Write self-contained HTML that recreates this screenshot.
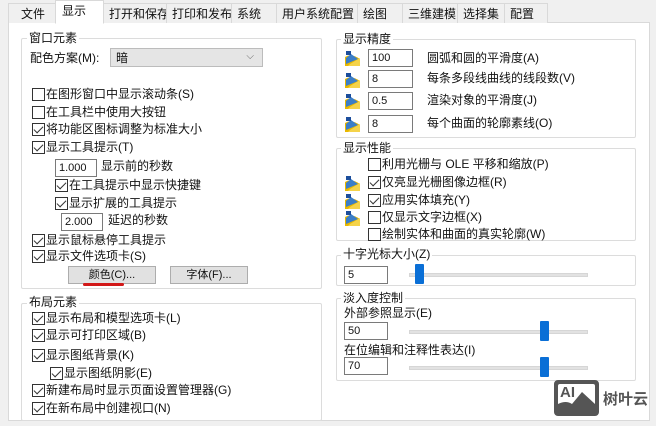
<!DOCTYPE html><html><head><meta charset="utf-8"><style>
*{box-sizing:border-box;margin:0;padding:0}
body{width:656px;height:426px;background:#f0f0f0;position:relative;overflow:hidden;font-family:"Liberation Sans","Noto Sans CJK SC",sans-serif;font-size:12px;color:#111}
.a{position:absolute;white-space:nowrap;line-height:14px}
.tab{position:absolute;top:3px;height:20px;background:#f0f0f0;border:1px solid #d9d9d9;border-bottom:none;padding:3px 0 0 5px;font-size:12px;white-space:nowrap;overflow:hidden;line-height:14px}
.panel{position:absolute;left:8px;top:22px;width:642px;height:399px;background:#fff;border:1px solid #d9d9d9}
.g{position:absolute;border:1px solid #dcdcdc;border-radius:2px}
.gt{position:absolute;background:#fff;padding:0 2px;line-height:14px}
.cb{position:absolute;width:13px;height:13px;border:1px solid #333;background:#fff}
.cb.c::after{content:"";position:absolute;left:3px;top:0px;width:4px;height:8px;border:solid #333;border-width:0 1.3px 1.3px 0;transform:rotate(45deg)}
.in{position:absolute;height:18px;border:1px solid #7a7a7a;background:#fff;padding:1px 3px;font-size:11px;line-height:14px}
.btn{position:absolute;height:18px;background:#e1e1e1;border:1px solid #adadad;text-align:center;line-height:16px;font-size:11px}
.trk{position:absolute;height:4px;background:#e2e2e2;border:1px solid #d6d6d6}
.th{position:absolute;width:9px;height:20px;background:#0a6fd6;border-radius:1px}
.ic{position:absolute;width:15px;height:16px}
</style></head><body>
<div class="panel"></div>
<div class="tab" style="left:8px;width:48px;padding-left:12px">文件</div>
<div class="tab" style="left:55px;top:0;height:24px;width:49px;background:#fff;z-index:2;border-bottom:1px solid #fff;padding-left:6px">显示</div>
<div class="tab" style="left:103px;width:64px">打开和保存</div>
<div class="tab" style="left:166px;width:66px">打印和发布</div>
<div class="tab" style="left:231px;width:46px">系统</div>
<div class="tab" style="left:276px;width:82px">用户系统配置</div>
<div class="tab" style="left:357px;width:46px">绘图</div>
<div class="tab" style="left:402px;width:56px">三维建模</div>
<div class="tab" style="left:457px;width:48px">选择集</div>
<div class="tab" style="left:504px;width:44px">配置</div>

<div class="g" style="left:21px;top:38px;width:301px;height:251px"></div>
<div class="gt a" style="left:27px;top:31px">窗口元素</div>
<div class="a" style="left:30px;top:51px">配色方案(M):</div>
<div style="position:absolute;left:110px;top:48px;width:153px;height:19px;background:#e5e5e5;border:1px solid #bcbcbc;padding:2px 5px;line-height:14px">暗<span style="position:absolute;right:8px;top:1px;color:#666;font-size:10px">⌵</span></div>
<div class="cb" style="left:32px;top:88px"></div><div class="a" style="left:46px;top:87px">在图形窗口中显示滚动条(S)</div>
<div class="cb" style="left:32px;top:106px"></div><div class="a" style="left:46px;top:105px">在工具栏中使用大按钮</div>
<div class="cb c" style="left:32px;top:123px"></div><div class="a" style="left:46px;top:122px">将功能区图标调整为标准大小</div>
<div class="cb c" style="left:32px;top:141px"></div><div class="a" style="left:46px;top:140px">显示工具提示(T)</div>
<div class="in" style="left:55px;top:159px;width:42px">1.000</div><div class="a" style="left:101px;top:159px">显示前的秒数</div>
<div class="cb c" style="left:55px;top:179px"></div><div class="a" style="left:69px;top:178px">在工具提示中显示快捷键</div>
<div class="cb c" style="left:55px;top:197px"></div><div class="a" style="left:69px;top:196px">显示扩展的工具提示</div>
<div class="in" style="left:61px;top:213px;width:42px">2.000</div><div class="a" style="left:108px;top:213px">延迟的秒数</div>
<div class="cb c" style="left:32px;top:234px"></div><div class="a" style="left:46px;top:233px">显示鼠标悬停工具提示</div>
<div class="cb c" style="left:32px;top:250px"></div><div class="a" style="left:46px;top:249px">显示文件选项卡(S)</div>
<div class="btn" style="left:68px;top:266px;width:88px">颜色(C)...</div>
<div class="btn" style="left:170px;top:266px;width:78px">字体(F)...</div>
<div style="position:absolute;left:83px;top:283px;width:41px;height:3px;background:#d21818;border-radius:2px"></div>

<div class="g" style="left:21px;top:303px;width:301px;height:118px"></div>
<div class="gt a" style="left:27px;top:295px">布局元素</div>
<div class="cb c" style="left:32px;top:312px"></div><div class="a" style="left:46px;top:311px">显示布局和模型选项卡(L)</div>
<div class="cb c" style="left:32px;top:329px"></div><div class="a" style="left:46px;top:328px">显示可打印区域(B)</div>
<div class="cb c" style="left:32px;top:349px"></div><div class="a" style="left:46px;top:348px">显示图纸背景(K)</div>
<div class="cb c" style="left:50px;top:367px"></div><div class="a" style="left:64px;top:366px">显示图纸阴影(E)</div>
<div class="cb c" style="left:32px;top:384px"></div><div class="a" style="left:46px;top:383px">新建布局时显示页面设置管理器(G)</div>
<div class="cb c" style="left:32px;top:402px"></div><div class="a" style="left:46px;top:401px">在新布局中创建视口(N)</div>

<svg width="0" height="0" style="position:absolute"><defs><symbol id="i" viewBox="0 0 15 16"><rect x="0" y="0" width="15" height="16" fill="#fff"/><path d="M0 16 L0 7 Q6 3 15 9 L15 16Z" fill="#e8b800"/><path d="M1 8 L6 4 L13 9 L1 14Z" fill="#3b7ec8"/><rect x="1" y="1" width="5" height="4" fill="#1c4e9c"/><path d="M5 14 L15 8 L15 16 L3 16Z" fill="#f5d34a"/></symbol></defs></svg>

<div class="g" style="left:336px;top:39px;width:300px;height:99px"></div>
<div class="gt a" style="left:341px;top:32px">显示精度</div>
<svg class="ic" style="left:345px;top:50px"><use href="#i"/></svg><div class="in" style="left:368px;top:49px;width:45px">100</div><div class="a" style="left:427px;top:51px">圆弧和圆的平滑度(A)</div>
<svg class="ic" style="left:345px;top:72px"><use href="#i"/></svg><div class="in" style="left:368px;top:70px;width:45px">8</div><div class="a" style="left:427px;top:71px">每条多段线曲线的线段数(V)</div>
<svg class="ic" style="left:345px;top:93px"><use href="#i"/></svg><div class="in" style="left:368px;top:92px;width:45px">0.5</div><div class="a" style="left:427px;top:93px">渲染对象的平滑度(J)</div>
<svg class="ic" style="left:345px;top:116px"><use href="#i"/></svg><div class="in" style="left:368px;top:115px;width:45px">8</div><div class="a" style="left:427px;top:116px">每个曲面的轮廓素线(O)</div>

<div class="g" style="left:336px;top:148px;width:300px;height:93px"></div>
<div class="gt a" style="left:341px;top:141px">显示性能</div>
<div class="cb" style="left:368px;top:158px"></div><div class="a" style="left:382px;top:157px">利用光栅与 OLE 平移和缩放(P)</div>
<svg class="ic" style="left:345px;top:175px"><use href="#i"/></svg><div class="cb c" style="left:368px;top:176px"></div><div class="a" style="left:382px;top:175px">仅亮显光栅图像边框(R)</div>
<svg class="ic" style="left:345px;top:193px"><use href="#i"/></svg><div class="cb c" style="left:368px;top:194px"></div><div class="a" style="left:382px;top:193px">应用实体填充(Y)</div>
<svg class="ic" style="left:345px;top:210px"><use href="#i"/></svg><div class="cb" style="left:368px;top:211px"></div><div class="a" style="left:382px;top:210px">仅显示文字边框(X)</div>
<div class="cb" style="left:368px;top:228px"></div><div class="a" style="left:382px;top:227px">绘制实体和曲面的真实轮廓(W)</div>

<div class="g" style="left:336px;top:255px;width:300px;height:31px"></div>
<div class="gt a" style="left:341px;top:247px">十字光标大小(Z)</div>
<div class="in" style="left:344px;top:266px;width:44px">5</div>
<div class="trk" style="left:409px;top:273px;width:179px"></div><div class="th" style="left:415px;top:264px"></div>

<div class="g" style="left:336px;top:298px;width:300px;height:83px"></div>
<div class="gt a" style="left:341px;top:291px">淡入度控制</div>
<div class="a" style="left:344px;top:306px">外部参照显示(E)</div>
<div class="in" style="left:344px;top:322px;width:44px">50</div>
<div class="trk" style="left:409px;top:330px;width:179px"></div><div class="th" style="left:540px;top:321px"></div>
<div class="a" style="left:344px;top:343px">在位编辑和注释性表达(I)</div>
<div class="in" style="left:344px;top:357px;width:44px">70</div>
<div class="trk" style="left:409px;top:366px;width:179px"></div><div class="th" style="left:540px;top:357px"></div>

<div style="position:absolute;left:554px;top:380px;width:45px;height:36px;background:#555;border-radius:4px"><div style="position:absolute;left:4px;top:4px;width:37px;height:28px;background:#fff;border-radius:2px"></div><span style="position:absolute;left:6px;top:5px;font-weight:bold;font-size:15px;color:#555;line-height:16px">AI</span><svg style="position:absolute;left:4px;top:4px" width="37" height="28"><path d="M0 28 L0 20 Q8 16 14 20 L24 8 L37 20 L37 28Z" fill="#555"/></svg></div>
<div class="a" style="left:603px;top:391px;font-size:15px;font-weight:bold;color:#555;line-height:18px">树叶云</div>
</body></html>
